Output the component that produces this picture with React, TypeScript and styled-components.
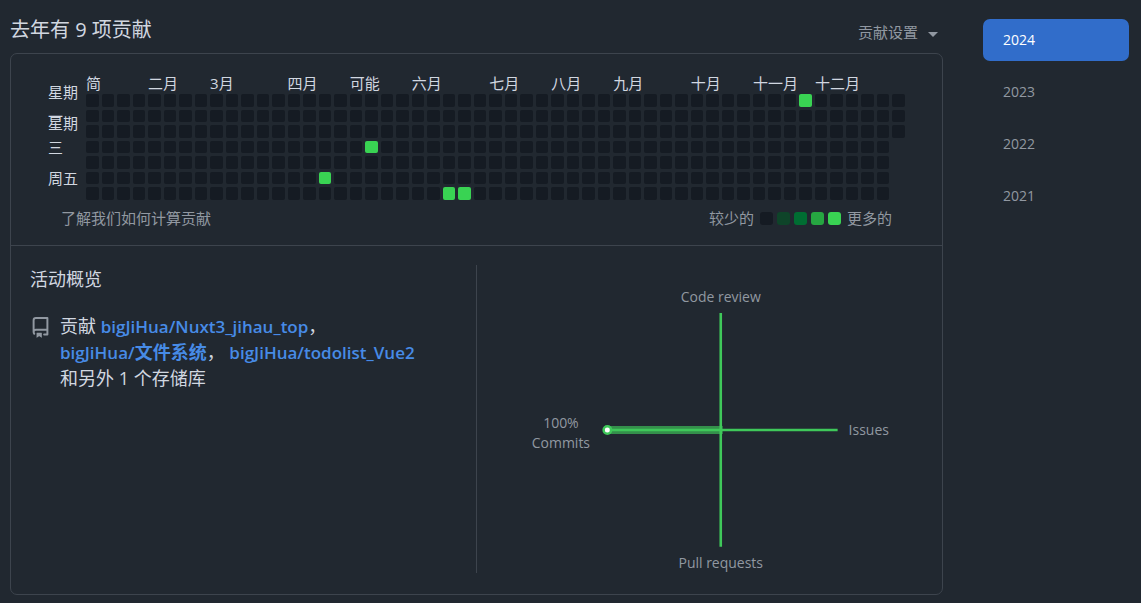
import React from "react";
import styled, { createGlobalStyle } from "styled-components";

const color = {
  page: "#212830",
  text: "#d1d7e0",
  muted: "#9198a1",
  border: "#3d444d",
  accent: "#316dca",
  link: "#478be6",
  levels: ["#151b23", "#0e4429", "#006d32", "#26a641", "#39d353"],
  axis: "#3fc85a",
};

const fontStack = `"Open Sans", "Noto Sans CJK SC", sans-serif`;

const GlobalStyle = createGlobalStyle`
  * { box-sizing: border-box; }
  body {
    margin: 0;
    background: ${color.page};
    color: ${color.text};
    font-family: ${fontStack};
    font-size: 15px;
    line-height: 24px;
  }
`;

const Page = styled.div`
  display: grid;
  grid-template-columns: minmax(0, 1fr) 146px;
  column-gap: 40px;
  padding: 19px 12px 8px 10px;
`;

const Main = styled.main`
  min-width: 0;
`;

const Header = styled.header`
  display: flex;
  justify-content: space-between;
  align-items: flex-start;
  height: 34px;
`;

const Title = styled.h2`
  margin: 0;
  font-size: 20px;
  font-weight: 400;
  line-height: 22px;
`;

const SettingsButton = styled.button`
  display: flex;
  align-items: center;
  gap: 10px;
  margin: 0;
  padding: 1px 5px 0 0;
  border: 0;
  background: none;
  color: ${color.muted};
  font: inherit;
  cursor: pointer;
`;

const Caret = styled.span`
  margin-top: 4px;
  border: 5px solid transparent;
  border-top-color: currentColor;
  border-bottom-width: 0;
`;

const Card = styled.section`
  border: 1px solid ${color.border};
  border-radius: 7px;
`;

const CalendarPanel = styled.div`
  padding: 18px 37px 15px;
  border-bottom: 1px solid ${color.border};
`;

const Calendar = styled.table`
  display: grid;
  grid-template-columns: 35px repeat(53, minmax(0, 1fr));
  grid-template-rows: 19px repeat(7, minmax(0, 1fr));
  gap: 3px;
  width: 100%;
  height: 128px;

  thead,
  tbody,
  tr {
    display: contents;
  }
`;

const Month = styled.th<{ $weeks: number }>`
  grid-column: span ${(p) => p.$weeks};
  padding: 0;
  font-weight: 400;
  text-align: left;
  line-height: 22px;
  white-space: nowrap;
`;

const Corner = styled.td`
  padding: 0;
`;

const DayLabel = styled.th`
  display: flex;
  align-items: flex-end;
  grid-column: 1;
  padding: 0;
  font-weight: 400;
  text-align: left;

  span {
    margin-bottom: -6px;
  }
`;

const Day = styled.td<{ $level: number }>`
  padding: 0;
  border-radius: 2px;
  background: ${(p) => color.levels[p.$level]};
`;

const CalendarFooter = styled.footer`
  display: flex;
  justify-content: space-between;
  align-items: center;
  padding: 6px 13px 0;
  color: ${color.muted};
`;

const MutedLink = styled.a`
  color: inherit;
  text-decoration: none;
`;

const Legend = styled.div`
  display: flex;
  align-items: center;
  gap: 6px;
`;

const Swatches = styled.span`
  display: flex;
  gap: 4px;
`;

const Swatch = styled.span<{ $level: number }>`
  width: 13px;
  height: 13px;
  border-radius: 3px;
  background: ${(p) => color.levels[p.$level]};
`;

const Overview = styled.div`
  display: grid;
  grid-template-columns: minmax(0, 1fr) minmax(0, 1fr);
  padding: 19px 0 21px;
`;

const Activity = styled.div`
  padding: 0 19px;
  border-right: 1px solid ${color.border};
`;

const SubTitle = styled.h3`
  margin: 0 0 20px;
  font-size: 18px;
  font-weight: 400;
  line-height: 28px;
`;

const Repositories = styled.div`
  display: flex;
  gap: 9px;
  font-size: 18px;
  line-height: 26px;

  svg {
    flex: none;
    margin-top: 4px;
  }
`;

const RepositoryText = styled.p`
  margin: 0;
`;

const RepositoryLink = styled.a`
  color: ${color.link};
  font-size: 17px;
  font-weight: 600;
  line-height: 20px;
  text-decoration: none;
`;

const RepositoryName = styled.span`
  font-size: 18px;
`;

const ChartColumn = styled.div`
  display: flex;
  justify-content: center;
  padding-left: 20px;
`;

const Chart = styled.svg`
  display: block;
  width: 100%;
  max-width: 446px;
  height: 308px;
  overflow: visible;
  font-size: 14px;
  fill: ${color.muted};
`;

const Years = styled.nav`
  display: flex;
  flex-direction: column;
  gap: 10px;
`;

const YearLink = styled.a<{ $active?: boolean }>`
  padding: 0 20px;
  border-radius: 7px;
  background: ${(p) => (p.$active ? color.accent : "transparent")};
  color: ${(p) => (p.$active ? "#ffffff" : color.muted)};
  font-size: 14px;
  line-height: 42px;
  text-decoration: none;
`;

const months: [string, number][] = [
  ["简", 4],
  ["二月", 4],
  ["3月", 5],
  ["四月", 4],
  ["可能", 4],
  ["六月", 5],
  ["七月", 4],
  ["八月", 4],
  ["九月", 5],
  ["十月", 4],
  ["十一月", 4],
  ["十二月", 6],
];

const dayNames = [
  null,
  ["星期", "一"],
  null,
  ["星期", "三"],
  null,
  ["周五"],
  null,
];

// Weeks with contributions, keyed by weekday row.
const contributions: Record<number, number[]> = {
  0: [46],
  3: [18],
  5: [15],
  6: [23, 24],
};

const weeksInRow = (row: number) => (row < 3 ? 53 : 52);

const years = ["2024", "2023", "2022", "2021"];

function ContributionCalendar() {
  return (
    <Calendar>
      <thead>
        <tr>
          <Corner />
          {months.map(([name, weeks]) => (
            <Month key={name} $weeks={weeks} scope="colgroup">
              {name}
            </Month>
          ))}
        </tr>
      </thead>
      <tbody>
        {dayNames.map((label, row) => (
          <tr key={row}>
            <DayLabel scope="row">
              {label && (
                <span>
                  {label.map((line) => (
                    <React.Fragment key={line}>
                      {line}
                      <br />
                    </React.Fragment>
                  ))}
                </span>
              )}
            </DayLabel>
            {Array.from({ length: weeksInRow(row) }, (_, week) => (
              <Day
                key={week}
                $level={contributions[row]?.includes(week) ? 4 : 0}
              />
            ))}
          </tr>
        ))}
      </tbody>
    </Calendar>
  );
}

function RepoIcon() {
  return (
    <svg width="21" height="21" viewBox="0 0 16 16" fill={color.muted} aria-hidden="true">
      <path d="M2 2.5A2.5 2.5 0 0 1 4.5 0h8.75a.75.75 0 0 1 .75.75v12.5a.75.75 0 0 1-.75.75h-2.5a.75.75 0 0 1 0-1.5h1.75v-2h-8a1 1 0 0 0-.714 1.7.75.75 0 1 1-1.072 1.05A2.495 2.495 0 0 1 2 11.5Zm10.5-1h-8a1 1 0 0 0-1 1v6.708A2.486 2.486 0 0 1 4.5 9h8ZM5 12.25a.25.25 0 0 1 .25-.25h3.5a.25.25 0 0 1 .25.25v3.25a.25.25 0 0 1-.4.2l-1.45-1.087a.249.249 0 0 0-.3 0L5.4 15.7a.25.25 0 0 1-.4-.2Z" />
    </svg>
  );
}

function ActivityChart() {
  return (
    <Chart viewBox="0 0 446 308" role="img" aria-label="Activity breakdown">
      <path d="M110 165H226" stroke={color.axis} strokeOpacity="0.65" strokeWidth="8" />
      <path d="M107 165H341M224 48V282" stroke={color.axis} strokeWidth="2.6" />
      <circle cx="110.5" cy="165" r="3.75" fill="#ffffff" stroke={color.axis} strokeWidth="2.5" />
      <text x="224" y="37" textAnchor="middle">Code review</text>
      <text x="224" y="303" textAnchor="middle">Pull requests</text>
      <text x="352" y="170">Issues</text>
      <text x="64" y="163" textAnchor="middle">100%</text>
      <text x="64" y="183" textAnchor="middle">Commits</text>
    </Chart>
  );
}

export default function App() {
  return (
    <>
      <GlobalStyle />
      <Page>
        <Main>
          <Header>
            <Title>去年有 9 项贡献</Title>
            <SettingsButton type="button">
              贡献设置
              <Caret />
            </SettingsButton>
          </Header>
          <Card>
            <CalendarPanel>
              <ContributionCalendar />
              <CalendarFooter>
                <MutedLink href="#about">了解我们如何计算贡献</MutedLink>
                <Legend>
                  <span>较少的</span>
                  <Swatches>
                    {color.levels.map((_, level) => (
                      <Swatch key={level} $level={level} />
                    ))}
                  </Swatches>
                  <span>更多的</span>
                </Legend>
              </CalendarFooter>
            </CalendarPanel>
            <Overview>
              <Activity>
                <SubTitle>活动概览</SubTitle>
                <Repositories>
                  <RepoIcon />
                  <RepositoryText>
                    贡献 <RepositoryLink href="#nuxt3">bigJiHua/Nuxt3_jihau_top</RepositoryLink>，
                    <br />
                    <RepositoryLink href="#files">
                      bigJiHua/<RepositoryName>文件系统</RepositoryName>
                    </RepositoryLink>
                    ，{" "}
                    <RepositoryLink href="#todolist">bigJiHua/todolist_Vue2</RepositoryLink>
                    <br />
                    和另外 1 个存储库
                  </RepositoryText>
                </Repositories>
              </Activity>
              <ChartColumn>
                <ActivityChart />
              </ChartColumn>
            </Overview>
          </Card>
        </Main>
        <Years aria-label="Years">
          {years.map((year) => (
            <YearLink key={year} href={`#${year}`} $active={year === "2024"}>
              {year}
            </YearLink>
          ))}
        </Years>
      </Page>
    </>
  );
}
